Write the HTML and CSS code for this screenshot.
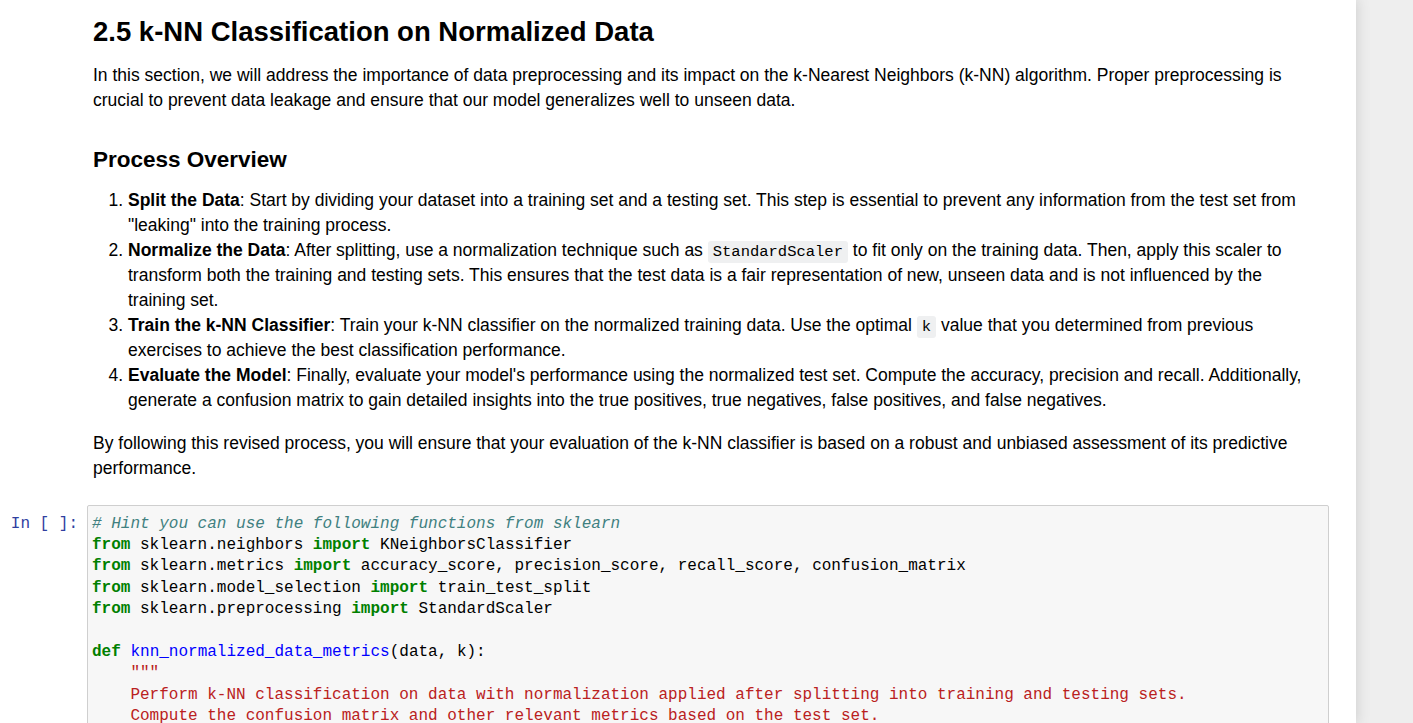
FILE: index.html
```html
<!DOCTYPE html>
<html>
<head>
<meta charset="utf-8">
<link rel="stylesheet" href="styles.css">
</head>
<body>
<div class="container">
  <div class="text-cell">
    <h2 class="h2">2.5 k-NN Classification on Normalized Data</h2>
    <p class="para">In this section, we will address the importance of data preprocessing and its impact on the k-Nearest Neighbors (k-NN) algorithm. Proper preprocessing is crucial to prevent data leakage and ensure that our model generalizes well to unseen data.</p>
    <h3 class="h3">Process Overview</h3>
    <ol class="steps">
      <li><strong>Split the Data</strong>: Start by dividing your dataset into a training set and a testing set. This step is essential to prevent any information from the test set from "leaking" into the training process.</li>
      <li><strong>Normalize the Data</strong>: After splitting, use a normalization technique such as <code class="chip">StandardScaler</code> to fit only on the training data. Then, apply this scaler to transform both the training and testing sets. This ensures that the test data is a fair representation of new, unseen data and is not influenced by the training set.</li>
      <li><strong>Train the k-NN Classifier</strong>: Train your k-NN classifier on the normalized training data. Use the optimal <code class="chip">k</code> value that you determined from previous exercises to achieve the best classification performance.</li>
      <li><strong>Evaluate the Model</strong>: Finally, evaluate your model's performance using the normalized test set. Compute the accuracy, precision and recall. Additionally, generate a confusion matrix to gain detailed insights into the true positives, true negatives, false positives, and false negatives.</li>
    </ol>
    <p class="para after">By following this revised process, you will ensure that your evaluation of the k-NN classifier is based on a robust and unbiased assessment of its predictive performance.</p>
  </div>
  <div class="code-cell">
    <div class="prompt">In&nbsp;[&nbsp;]:</div>
    <pre class="code"><span class="c"># Hint you can use the following functions from sklearn</span>
<span class="k">from</span> sklearn.neighbors <span class="k">import</span> KNeighborsClassifier
<span class="k">from</span> sklearn.metrics <span class="k">import</span> accuracy_score, precision_score, recall_score, confusion_matrix
<span class="k">from</span> sklearn.model_selection <span class="k">import</span> train_test_split
<span class="k">from</span> sklearn.preprocessing <span class="k">import</span> StandardScaler

<span class="k">def</span> <span class="f">knn_normalized_data_metrics</span>(data, k):
    <span class="s">"""</span>
<span class="s">    Perform k-NN classification on data with normalization applied after splitting into training and testing sets.</span>
<span class="s">    Compute the confusion matrix and other relevant metrics based on the test set.</span>
</pre>
  </div>
</div>
</body>
</html>
```

FILE: styles.css
```css
html, body {
  margin: 0;
  padding: 0;
  height: 100%;
  overflow: hidden;
}
body {
  background: #eeeeee;
  font-family: "Liberation Sans", Arial, sans-serif;
  color: #000;
}
.container {
  width: 1356px;
  height: 100%;
  background: #fff;
  box-shadow: 0 0 12px 1px rgba(87, 87, 87, 0.2);
  box-sizing: border-box;
}
.text-cell {
  padding: 17px 44px 0 93px;
  font-size: 17.5px;
  line-height: 25px;
}
.h2 {
  font-size: 27.5px;
  line-height: 30px;
  font-weight: bold;
  margin: 0 0 15.5px 0;
}
.para {
  margin: 0;
}
.h3 {
  font-size: 22.5px;
  line-height: 25px;
  font-weight: bold;
  margin: 34px 0 16px 0;
}
.steps {
  margin: 0;
  padding-left: 35px;
}
.para.after {
  margin-top: 18px;
}
.chip {
  font-family: "Liberation Mono", monospace;
  font-size: 15.5px;
  line-height: 1;
  background: #eff0f1;
  padding: 2px 5px;
  border-radius: 3px;
}
.code-cell {
  display: flex;
  margin-top: 24.5px;
}
.prompt {
  width: 87px;
  box-sizing: border-box;
  padding: 8.5px 9px 0 0;
  text-align: right;
  font-family: "Liberation Mono", monospace;
  font-size: 16px;
  line-height: 21.4px;
  color: #303f9f;
}
.code {
  flex: 0 0 1242px;
  margin: 0;
  background: #f7f7f7;
  border: 1px solid #cfcfcf;
  border-radius: 2px;
  padding: 7.5px 4px 0 4px;
  font-family: "Liberation Mono", monospace;
  font-size: 16px;
  line-height: 21.4px;
  color: #000;
  height: 300px;
  box-sizing: border-box;
}
.k { color: #008000; font-weight: bold; }
.c { color: #408080; font-style: italic; }
.s { color: #ba2121; }
.f { color: #0000ff; }
```
